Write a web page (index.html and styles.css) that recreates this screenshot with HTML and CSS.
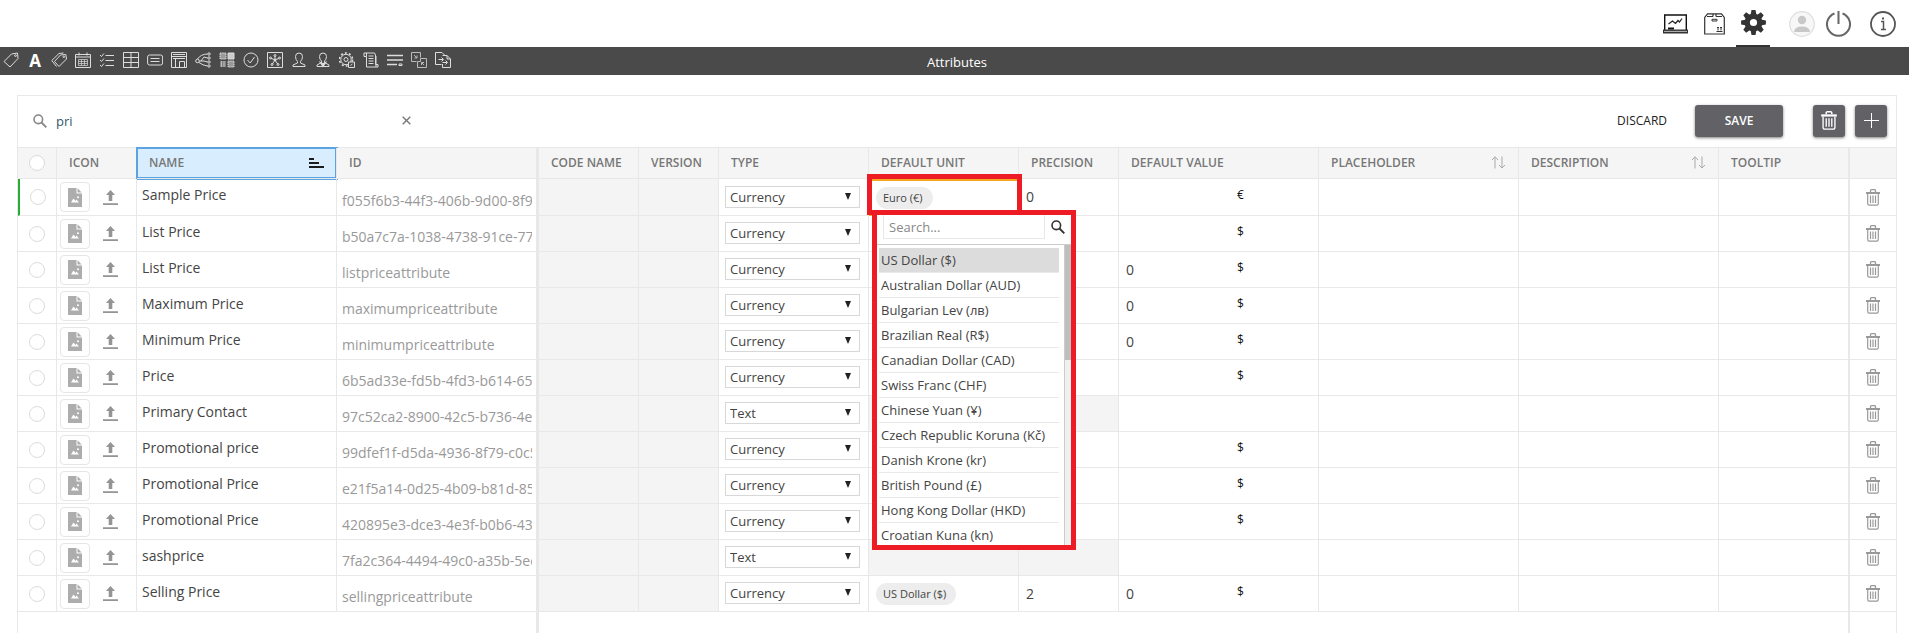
FILE: index.html
```
<!DOCTYPE html>
<html lang="en">
<head>
<meta charset="utf-8">
<title>Attributes</title>
<link rel="stylesheet" href="styles.css">
</head>
<body>
<svg class="sprite" aria-hidden="true">
  <symbol id="i-trash" viewBox="0 0 14 17"><path d="M4.500 3V1.500Q4.500 .7 5.500 .7H8.500Q9.500 .7 9.500 1.500V3" fill="none" stroke="currentColor" stroke-width="1.300"/><path d="M0 3h14v2H0z" fill="currentColor"/><path d="M1.700 5V14.500Q1.700 16.200 3.400 16.200H10.600Q12.300 16.200 12.300 14.500V5M4.500 6.500V14M7 6.500V14M9.500 6.500V14" fill="none" stroke="currentColor" stroke-width="1.200"/></symbol>
  <symbol id="i-file" viewBox="0 0 14 19"><path d="M0 0H8.500V5.500H14V19H0z" fill="#adadad"/><path d="M9.500 .3L13.700 4.500H9.500z" fill="#adadad"/><path d="M3 14.500L5.500 10.500L7.500 13L8.500 11.500L11 14.500z" fill="#fff"/><circle cx="10" cy="9.200" r="1" fill="#fff"/></symbol>
  <symbol id="i-upload" viewBox="0 0 15 15"><path d="M7.500 0L12 5H9.300V11H5.700V5H3z M0 13.200H15V15H0z" fill="#949494"/></symbol>
  <symbol id="i-search" viewBox="0 0 14 14"><circle cx="5.300" cy="5.300" r="4.300" fill="none" stroke="currentColor" stroke-width="1.600"/><path d="M8.500 8.500L13.300 13.300" stroke="currentColor" stroke-width="1.900"/></symbol>
  <symbol id="i-sort" viewBox="0 0 15 13"><path d="M4 12.500V.8M1 4L4 .8L7 4" fill="none" stroke="currentColor" stroke-width="1"/><path d="M11 .5V12M8 9L11 12L14 9" fill="none" stroke="currentColor" stroke-width="1"/></symbol>
  <symbol id="i-sorted" viewBox="0 0 15 10"><path d="M0 1H5M0 5H10M0 9H15" stroke="#1b1b1b" stroke-width="1.800"/></symbol>
</svg>

<header class="top">
  <nav class="top-nav" aria-label="Main">
    <a href="#" class="top-link" aria-label="Dashboard"><svg width="25" height="20" viewBox="0 0 25 20"><path d="M1.700 16V1H23.300V16" fill="none" stroke="#111" stroke-width="1.400"/><path d="M0 15.500H25V19.500H0z" fill="#333"/><path d="M1 17.400H24" stroke="#bbb"/><path d="M5.500 10L9.500 7L12.500 9.500L15 6.500L16.500 8L19 4.500" fill="none" stroke="#222" stroke-width="1.200"/><path d="M5 13.500h6v2H5z" fill="#111"/></svg></a>
    <a href="#" class="top-link" aria-label="Products"><svg width="21" height="22" viewBox="0 0 21 22"><path d="M.7 4.500V21H20.300V4.500L17.500 .8H3.500zM3 3.500H9M12 3.500H18M9 .8V3.500M12 .8V3.500" fill="none" stroke="#333" stroke-width="1.200"/><path d="M8 6.300H13V8H8z" fill="none" stroke="#333"/><path d="M12.500 18.500H18.500M14 17.500V14M17 17.500V14M13 15L14 14L15 15M16 15L17 14L18 15" fill="none" stroke="#333"/></svg></a>
    <a href="#" class="top-link current" aria-label="Settings"><svg width="25" height="25" viewBox="-12.500 -12.500 25 25" fill="#333"><path id="tooth" d="M-3 -7L-2 -12.400H2L3 -7z"/><use href="#tooth" transform="rotate(45)"/><use href="#tooth" transform="rotate(90)"/><use href="#tooth" transform="rotate(135)"/><use href="#tooth" transform="rotate(180)"/><use href="#tooth" transform="rotate(225)"/><use href="#tooth" transform="rotate(270)"/><use href="#tooth" transform="rotate(315)"/><circle r="6.300" fill="none" stroke="#333" stroke-width="5.400"/></svg></a>
    <a href="#" class="top-link" aria-label="Profile"><svg width="26" height="26" viewBox="0 0 26 26"><circle cx="13" cy="13" r="12.300" fill="#f7f7f7" stroke="#dedede" stroke-width="1.200"/><circle cx="13" cy="9" r="4.200" fill="#c8c8c8"/><path d="M5 21Q5.500 15.500 13 15.500T21 21z" fill="#c8c8c8"/></svg></a>
    <a href="#" class="top-link" aria-label="Log out"><svg width="25" height="26" viewBox="0 0 25 26"><path d="M8.500 2.500A11.500 11.500 0 1 0 16.500 2.500M12.500 0V13" fill="none" stroke="#666" stroke-width="2"/></svg></a>
    <a href="#" class="top-link" aria-label="Information"><svg width="26" height="26" viewBox="0 0 26 26"><circle cx="13" cy="13" r="12" fill="none" stroke="#555" stroke-width="1.800"/><path d="M11 10.500H13.500V18M11 18.500H16" fill="none" stroke="#555" stroke-width="1.500"/><path d="M12 6.500h2v2h-2z" fill="#555"/></svg></a>
  </nav>
</header>

<div class="bar">
  <nav class="tools" aria-label="Settings sections">
    <a href="#" aria-label="Tags"><svg viewBox="0 0 16 16"><path d="M1 9.500L8.500 2L14.500 1L15 6.500L7 15z"/><circle cx="12.500" cy="3.600" r=".9"/></svg></a>
    <a href="#" aria-label="Text" class="letter">A</a>
    <a href="#" aria-label="Tag groups"><svg viewBox="0 0 16 16"><path d="M3.500 9.500L9.500 3L14.800 2.500L15.500 7L8 14.500z"/><path d="M5.500 14.500L.8 8.500L8 1.500L12.500 1"/><circle cx="12.800" cy="4.800" r=".8"/></svg></a>
    <a href="#" aria-label="Calendar"><svg viewBox="0 0 16 16"><path d="M.5 2.500H15.500V15.500H.5zM.5 5H15.500M4 .5V3.500M12 .5V3.500" /><path d="M3.500 7.500H12.500V13.500H3.500zM3.500 9.500H12.500M3.500 11.500H12.500M6.500 7.500V13.500M9.500 7.500V13.500" stroke-width=".7"/></svg></a>
    <a href="#" aria-label="Checklist"><svg viewBox="0 0 16 16"><path d="M1 3L2.500 4.500L5 1.500M1 8L2.500 9.500L5 6.500M1 13L2.500 14.500L5 11.500M6.500 3.500H15M6.500 8.500H15M6.500 13.500H15"/></svg></a>
    <a href="#" aria-label="Table"><svg viewBox="0 0 16 16"><path d="M.5 .5H15.500V15.500H.5zM.5 5.500H15.500M.5 10.500H15.500M8 .5V15.500"/></svg></a>
    <a href="#" aria-label="Fields"><svg viewBox="0 0 16 16"><rect x=".6" y="3" width="15" height="10" rx="2"/><path d="M3.500 6.500H12.500M3.500 9.500H12.500"/></svg></a>
    <a href="#" aria-label="Templates"><svg viewBox="0 0 16 16"><path d="M.5 .5H15.500V15.500H.5zM.5 4.500H15.500M2 2.500H14M2 6.500H14M4.500 7V15.500M8.500 9.500H13.500V15.500M8.500 9.500V15.500"/></svg></a>
    <a href="#" aria-label="Relations"><svg viewBox="0 0 16 16"><circle cx="2.500" cy="9" r="1.800"/><circle cx="14" cy="2" r="1.200"/><circle cx="14" cy="6" r="1.200"/><circle cx="14" cy="10" r="1.200"/><circle cx="14" cy="14" r="1.200"/><path d="M2.500 7Q6 2 12.500 2M6 9L9 5L12.500 6M4.500 9H9L12.500 10M4 10.500Q8 13.500 12.500 14"/></svg></a>
    <a href="#" aria-label="Matrix"><svg viewBox="0 0 16 16"><path d="M1 1H7V7H1zM9 9H15V15H9z" fill="#999" stroke-dasharray="1.500 .7"/><path d="M9 1H15V7H9z" fill="#ccc"/><path d="M1 10H7M1 12H7M1 14H7M2.500 9V15M5 9V15" stroke="#bbb"/></svg></a>
    <a href="#" aria-label="Validation"><svg viewBox="0 0 16 16"><circle cx="8" cy="8" r="7"/><path d="M4.500 8L7.200 11L11.500 5"/></svg></a>
    <a href="#" aria-label="Network"><svg viewBox="0 0 16 16"><path d="M.5 .5H15.500V15.500H.5zM8 8V3.500M8 8L3.500 6M8 8L12.500 6M8 8L5 12.500M8 8L11 12.500"/><circle cx="8" cy="3.500" r="1"/><circle cx="3.500" cy="6" r="1"/><circle cx="12.500" cy="6" r="1"/><circle cx="5" cy="12.500" r="1"/><circle cx="11" cy="12.500" r="1"/><circle cx="8" cy="8" r="1"/></svg></a>
    <a href="#" aria-label="Users"><svg viewBox="0 0 16 16"><path d="M6.500 9.500Q4.500 7.500 4.500 4.500Q4.500 1 8 1T11.500 4.500Q11.500 7.500 9.500 9.500V11L14 13V14.500H2V13L6.500 11z"/></svg></a>
    <a href="#" aria-label="Roles"><svg viewBox="0 0 16 16"><path d="M6.500 9Q4.500 7.500 4.500 4.500Q4.500 1 8 1T11.500 4.500Q11.500 7.500 9.500 9V10.500L14 13V14.500H2V13L6.500 10.500z"/><path d="M6 11L8 14L10 11L8 12z" stroke-width="1.600"/></svg></a>
    <a href="#" aria-label="Automation"><svg viewBox="0 0 16 16"><circle cx="7" cy="7.500" r="5.200"/><circle cx="7" cy="7.500" r="6.500" stroke-dasharray="2 2.100" stroke-width="1.600"/><circle cx="7" cy="7.500" r="2"/><path d="M9.500 10H15.500V15.500H9.500z" fill="#4a4a4a"/><path d="M11.500 13.500L13.500 12"/></svg></a>
    <a href="#" aria-label="Scripts"><svg viewBox="0 0 16 16"><path d="M3.500 4.500V15H13V4M1 4.500V1H11.500L12.500 3V12.500H15V15H13M1 4.500H3.500V1M5.500 4H10.500M5.500 6.500H10.500M5.500 9H10.500M5.500 11.500H10.500"/></svg></a>
    <a href="#" aria-label="Lines"><svg viewBox="0 0 16 16"><path d="M0 3.500H16M0 8H16M0 12.500H10" stroke-width="1.700"/><path d="M12 12H15V13.500H12z"/></svg></a>
    <a href="#" aria-label="Merge"><svg viewBox="0 0 16 16"><path d="M9.500 5.500V.5H.5V9.500H5.500M9.500 6.500H15.500V15.500H6.500V9.500H9.500zM3 3L6 6M6 3.500V6H3.500M13 13L10.500 10.500M10.500 13V10.500H13" stroke="#bbb"/></svg></a>
    <a href="#" aria-label="Transfer"><svg viewBox="0 0 16 16"><path d="M6.500 12.500H.5V.5H7L9.500 3V4M7.500 3.500H12L15.500 7V15.500H7.500V12M12 3.500V7H15.500M3.500 7.500H8M6.500 5.500L8.500 7.500L6.500 9.500M7.500 10.500H12M10.500 8.500L12.500 10.500L10.500 12.500"/></svg></a>
  </nav>
  <h1 class="bar-title">Attributes</h1>
</div>

<main class="panel">
  <div class="actions">
    <label class="search"><svg class="search-icon" width="14" height="14"><use href="#i-search"/></svg><input type="text" value="pri" aria-label="Search attributes"></label>
    <button class="clear" aria-label="Clear search"><svg width="9" height="9" viewBox="0 0 9 9"><path d="M.7 .7L8.300 8.300M8.300 .7L.7 8.300" stroke="#777" stroke-width="1.400"/></svg></button>
    <button class="discard">DISCARD</button>
    <button class="solid save">SAVE</button>
    <button class="solid square delete" aria-label="Delete selected"><svg width="16" height="19"><use href="#i-trash"/></svg></button>
    <button class="solid square" aria-label="Add attribute"><svg width="15" height="15" viewBox="0 0 15 15"><path d="M7.500 0V15M0 7.500H15" stroke="#fff" stroke-width="1"/></svg></button>
  </div>
  <div class="grid">
    <table>
      <colgroup><col class="w39"><col class="w80"><col class="w200"><col class="w202"><col class="w100"><col class="w80"><col class="w150"><col class="w150"><col class="w100"><col class="w200"><col class="w200"><col class="w200"><col><col class="w46"></colgroup>
      <thead><tr>
        <th class="pick"><input type="checkbox" aria-label="Select all"></th>
        <th>ICON</th>
        <th class="active"><div class="head">NAME<svg width="15" height="10"><use href="#i-sorted"/></svg></div></th>
        <th class="thick">ID</th>
        <th>CODE NAME</th><th>VERSION</th><th>TYPE</th><th>DEFAULT UNIT</th><th>PRECISION</th><th>DEFAULT VALUE</th>
        <th><div class="head">PLACEHOLDER<svg class="sort" width="15" height="13"><use href="#i-sort"/></svg></div></th>
        <th><div class="head">DESCRIPTION<svg class="sort" width="15" height="13"><use href="#i-sort"/></svg></div></th>
        <th class="divider">TOOLTIP</th><th></th>
      </tr></thead>
      <tbody id="rows"></tbody>
    </table>
  </div>
</main>

<template id="picker">
  <div class="frame"></div>
  <div class="popup">
    <div class="popup-search"><input type="text" placeholder="Search..." aria-label="Search units"><button aria-label="Search"><svg width="14" height="14"><use href="#i-search"/></svg></button></div>
    <div class="popup-body">
      <ul class="units">
        <li class="on">US Dollar ($)</li><li>Australian Dollar (AUD)</li><li>Bulgarian Lev (лв)</li><li>Brazilian Real (R$)</li><li>Canadian Dollar (CAD)</li><li>Swiss Franc (CHF)</li><li>Chinese Yuan (¥)</li><li>Czech Republic Koruna (Kč)</li><li>Danish Krone (kr)</li><li>British Pound (£)</li><li>Hong Kong Dollar (HKD)</li><li>Croatian Kuna (kn)</li>
      </ul>
      <div class="track"><div class="thumb"></div></div>
    </div>
  </div>
</template>
<script src="app.js"></script>
</body>
</html>
```
FILE: styles.css
```
* { box-sizing: border-box; }
body { margin: 0; height: 100vh; overflow: hidden; display: flex; flex-direction: column; background: #fff; color: #444; font-family: "Open Sans", "Noto Sans", sans-serif; font-size: 13px; }
button, input, select { font: inherit; color: inherit; }
button { border: 0; padding: 0; background: none; display: flex; align-items: center; justify-content: center; cursor: pointer; }
svg { display: block; }
.sprite { position: absolute; width: 0; height: 0; }

.top { height: 47px; flex: none; display: flex; justify-content: flex-end; padding-right: 9px; }
.top-nav { display: flex; }
.top-link { display: flex; align-items: center; justify-content: center; width: 34px; margin-left: 5px; }
.top-link.current { border-bottom: 2px solid #333; padding-bottom: 1px; }
.top-link:nth-child(4) { margin-left: 15px; }
.top-link:nth-child(5) { margin-left: 2px; }
.top-link:nth-child(6) { margin-left: 11px; }

.bar { height: 28px; flex: none; background: #4a4a4a; display: grid; grid-template-columns: 1fr auto 1fr; align-items: center; }
.tools { display: flex; gap: 8px; padding-left: 3px; }
.tools a { width: 16px; height: 16px; flex: none; margin-bottom: 2px; }
.tools svg { width: 16px; height: 16px; fill: none; stroke: #ddd; stroke-width: 1; }
.tools .letter { color: #fff; font-weight: 700; font-size: 17px; line-height: 17px; text-align: center; text-decoration: none; }
.bar-title { margin: 0; padding: 2px 0 0 5px; color: #fff; font-size: 13px; font-weight: 400; line-height: 26px; }

.panel { flex: 1; min-height: 0; margin: 20px 12px 0 17px; border: 1px solid #e8e8e8; border-bottom: 0; display: flex; flex-direction: column; }
.actions { height: 51px; flex: none; display: flex; align-items: center; padding: 0 9px 2px 15px; }
.search { display: flex; align-items: center; gap: 9px; width: 367px; }
.search-icon { color: #888; flex: none; }
.search input { border: 0; outline: 0; padding: 0; width: 300px; background: none; color: #33596b; }
.clear { width: 12px; height: 20px; }
.discard { margin-left: auto; color: #222; font-size: 12px; }
.solid { background: #626266; color: #fff; height: 32px; border-radius: 3px; box-shadow: 0 1px 3px rgba(0, 0, 0, .5); }
.save { width: 88px; margin: 0 30px 0 28px; font-size: 12px; font-weight: 600; }
.square { width: 32px; }
.delete { margin-right: 10px; }

.grid { flex: 1; min-height: 0; }
table { width: 100%; height: 100%; table-layout: fixed; border-collapse: separate; border-spacing: 0; border-top: 1px solid #e8e8e8; }
.w39 { width: 39px; }
.w46 { width: 46px; }
.w80 { width: 80px; }
.w100 { width: 100px; }
.w150 { width: 150px; }
.w200 { width: 200px; }
.w202 { width: 202px; }
th, td { padding: 0; border-right: 1px solid #e8e8e8; border-bottom: 1px solid #e8e8e8; text-align: left; white-space: nowrap; }
th:last-child, td:last-child { border-right: 0; }
th { height: 31px; padding: 0 12px 1px; background: #f5f5f5; color: #777; font-size: 12px; font-weight: 600; line-height: 18px; }
th.active { background: #d8eefe; box-shadow: 0 0 0 1px #5ba3e1, inset 0 0 0 1px #5ba3e1; }
.head { display: flex; align-items: center; justify-content: space-between; }
.sort { color: #aaa; }
td { height: 36px; }
tr.first td { height: 37px; }
tr.first td:first-child { border-left: 2px solid #27ae34; }
th.thick, td.thick { border-right: 3px solid #e8e8e8; }
th.divider, td.divider { border-right: 2px solid #e8e8e8; }
.muted { background: #f4f4f4; }
tr.rest td { height: auto; border-bottom: 0; }
th.pick, td.pick { padding: 0; }
.pick input { appearance: none; display: block; width: 16px; height: 16px; margin: 0 auto; border: 1px solid #dcdcdc; border-radius: 50%; background: #fff; }
.media { display: flex; align-items: center; gap: 13px; padding-left: 3px; }
.thumb-box { width: 30px; height: 30px; border: 1px solid #e6e6e6; border-radius: 4px; }
td.name { padding: 0 5px 5px; font-size: 14px; }
td.id { padding: 6px 4px 0 5px; color: #999; font-size: 14px; }
.id div { overflow: hidden; }
.type select { appearance: none; display: block; width: 135px; height: 22px; margin: 0 0 1px 6px; padding: 0 4px; border: 1px solid #d8d8d8; border-radius: 0; background: none; color: #444; line-height: 18px; }
.type label { display: grid; align-items: center; }
.type label > * { grid-area: 1 / 1; }
.type svg { margin: 0 0 2px 126px; pointer-events: none; }
.unit { position: relative; }
.chip { display: inline-block; margin-left: 7px; padding: 0 10px 0 7px; height: 22px; border-radius: 11px; background: #ededed; font-size: 11px; line-height: 21px; vertical-align: middle; }
.open { border-top: 2px solid #f5a623; border-bottom: 1px solid #f5a623; }
td.number { padding: 0 0 1px 7px; font-size: 14px; }
.value { display: grid; grid-template-columns: 111px auto; align-items: center; font-size: 14px; }
.value b { font-size: 12px; font-weight: 400; color: #111; padding-bottom: 4px; }
.bin { color: #999; width: 46px; }

.frame { position: absolute; z-index: 2; left: -2px; top: -7px; width: 155px; height: 41px; border: 5px solid #ed1c24; }
.popup { position: absolute; z-index: 3; left: 3px; top: 29px; width: 204px; height: 340px; border: 5px solid #ed1c24; background: #fff; display: flex; flex-direction: column; }
.popup-search { display: flex; height: 30px; flex: none; padding: 0 6px; gap: 6px; border-bottom: 1px solid #ccc; }
.popup-search input { width: 162px; height: 24px; padding: 0 5px; border: 1px solid #e8e8e8; border-top: 0; outline: 0; }
.popup-search input::placeholder { color: #888; opacity: 1; }
.popup-search button { height: 24px; color: #333; }
.popup-body { flex: 1; min-height: 0; display: flex; overflow: hidden; }
.units { list-style: none; margin: 0; padding: 3px 5px 0 2px; flex: 1; }
.units li { height: 25px; padding-left: 2px; border-bottom: 1px solid #e8e8e8; line-height: 24px; }
.units .on { background: #dcdcdc; }
.track { width: 7px; background: #f0f0f0; border-left: 1px solid #ccc; }
.thumb { height: 115px; background: #bfbfbf; }
```
FILE: app.js
```
const rows = [
  { name: 'Sample Price', id: 'f055f6b3-44f3-406b-9d00-8f9', unit: 'Euro (€)', precision: '0', symbol: '€', open: true },
  { name: 'List Price', id: 'b50a7c7a-1038-4738-91ce-77', symbol: '$' },
  { name: 'List Price', id: 'listpriceattribute', value: '0', symbol: '$' },
  { name: 'Maximum Price', id: 'maximumpriceattribute', value: '0', symbol: '$' },
  { name: 'Minimum Price', id: 'minimumpriceattribute', value: '0', symbol: '$' },
  { name: 'Price', id: '6b5ad33e-fd5b-4fd3-b614-65', symbol: '$' },
  { name: 'Primary Contact', id: '97c52ca2-8900-42c5-b736-4e', text: true },
  { name: 'Promotional price', id: '99dfef1f-d5da-4936-8f79-c0c5', symbol: '$' },
  { name: 'Promotional Price', id: 'e21f5a14-0d25-4b09-b81d-85', symbol: '$' },
  { name: 'Promotional Price', id: '420895e3-dce3-4e3f-b0b6-43', symbol: '$' },
  { name: 'sashprice', id: '7fa2c364-4494-49c0-a35b-5ee', text: true },
  { name: 'Selling Price', id: 'sellingpriceattribute', unit: 'US Dollar ($)', precision: '2', value: '0', symbol: '$' },
];

const picker = document.getElementById('picker').innerHTML;

function renderRow(row) {
  const muted = row.text ? 'muted' : '';
  return `<tr class="${row.open ? 'first' : ''}">
    <td class="pick"><input type="checkbox" aria-label="Select ${row.name}"></td>
    <td><div class="media"><button class="thumb-box" aria-label="Icon"><svg width="14" height="19"><use href="#i-file"/></svg></button><button aria-label="Upload icon"><svg width="15" height="15"><use href="#i-upload"/></svg></button></div></td>
    <td class="name">${row.name}</td>
    <td class="id thick"><div>${row.id}</div></td>
    <td class="muted"></td><td class="muted"></td>
    <td class="type"><label><select aria-label="Type"><option>${row.text ? 'Text' : 'Currency'}</option></select><svg width="6" height="7" viewBox="0 0 6 7"><path d="M0 0H6L3 7z" fill="#222"/></svg></label></td>
    <td class="unit ${row.open ? 'open' : ''} ${muted}">${row.unit ? `<span class="chip">${row.unit}</span>` : ''}${row.open ? picker : ''}</td>
    <td class="number ${muted}">${row.precision || ''}</td>
    <td class="number"><div class="value"><span>${row.value || ''}</span><b>${row.symbol || ''}</b></div></td>
    <td></td><td></td><td class="divider"></td>
    <td><button class="bin" aria-label="Delete ${row.name}"><svg width="14" height="17"><use href="#i-trash"/></svg></button></td>
  </tr>`;
}

document.getElementById('rows').innerHTML = rows.map(renderRow).join('') +
  '<tr class="rest"><td colspan="4" class="thick"></td><td colspan="9" class="divider"></td><td></td></tr>';
```
